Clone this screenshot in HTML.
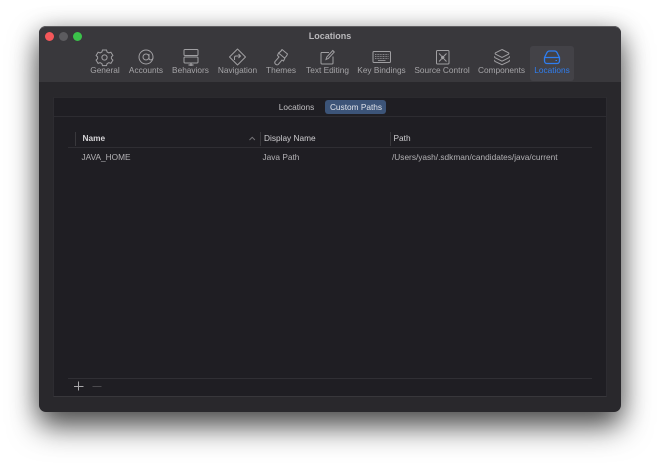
<!DOCTYPE html>
<html><head><meta charset="utf-8"><style>
html,body{margin:0;padding:0;width:660px;height:464px;background:#fff;overflow:hidden;font-family:"Liberation Sans",sans-serif}
.win{position:absolute;left:39px;top:26px;width:582px;height:386px;border-radius:7px;background:#29282c;box-shadow:0 15px 30px rgba(0,0,0,.62),0 4px 24px rgba(0,0,0,.28);overflow:hidden}
.abs{position:absolute}
.t{position:absolute;white-space:nowrap;transform:translateX(-50%);font-size:8.3px;line-height:10px;color:#a5a4a7;filter:blur(.35px)}
.l{position:absolute;white-space:nowrap;font-size:8.3px;line-height:10px;filter:blur(.3px)}
.dot{position:absolute;width:9px;height:9px;border-radius:50%;top:32px;filter:blur(.3px)}
svg.ic{position:absolute;left:0;top:0;filter:blur(.35px)}
</style></head><body>
<div class="win"></div>
<div class="abs" style="left:39px;top:26px;width:582px;height:56px;background:#39383c;border-radius:7px 7px 0 0;border-top:1px solid #5f5e61;box-sizing:border-box"></div>
<div class="abs" style="left:530px;top:46px;width:44px;height:35px;background:#434247;border-radius:3px"></div>
<div class="dot" style="left:45px;background:#f4575a"></div>
<div class="dot" style="left:59px;background:#5c5b5f"></div>
<div class="dot" style="left:73px;background:#3bc24a"></div>
<div class="t" style="left:330px;top:31px;font-size:9px;font-weight:bold;color:#b9b8bb">Locations</div>

<svg class="ic" width="660" height="464" viewBox="0 0 660 464" fill="none" stroke="#a09fa2" stroke-width="1">
<path d="M102.500 50h4l.6 2 1.800.9 2-.7 2 3.300-1.500 1.400v1.800l1.500 1.400-2 3.300-2-.7-1.800.9-.6 2h-4l-.6-2-1.800-.9-2 .7-2-3.300 1.500-1.400v-1.800l-1.500-1.400 2-3.300 2 .7 1.800-.9z"/>
<circle cx="104.500" cy="57.500" r="2.600"/>
<circle cx="146" cy="57" r="7"/><circle cx="146" cy="57" r="3"/><path d="M149 54v4.500c0 2 3.800 2 4-1"/>
<rect x="184" y="49.500" width="14" height="6" rx="1"/><rect x="184" y="57" width="14" height="6" rx="1"/>
<path d="M191 63v3M188.500 65h5" stroke-width="1.300"/>
<path d="M237.500 49l8 8-8 8-8-8z" stroke-linejoin="round"/><path d="M234.500 60v-2.500a1.500 1.500 0 0 1 1.500-1.500h4M238.500 54l2 2-2 2"/>
<path d="M282 49.500l5.500 4.500c-.5 1.500-1.500 3-3 4l-6-5c1.500-.8 2.800-2 3.500-3.500z" stroke-linejoin="round"/>
<path d="M278.500 53l-1 2.500 1.500 1.500-4 4.500a2.300 2.300 0 0 0 3.200 3l3.800-4.500 1.500 1 1.500-3"/>
<path d="M321 52.500h8M333 56.500v6.500a1 1 0 0 1-1 1h-10a1 1 0 0 1-1-1v-10a1 1 0 0 1 1-.5"/><path d="M326 59.500l.8-2.500 6-6.500 1.500 1.500-6 6.500z"/>
<rect x="373" y="51.500" width="17.500" height="11" rx="1"/><path d="M375 54.500h13.500M375 56.500h13.500M375 58.500h13.500" stroke-dasharray="1 .6" stroke-width=".8"/><path d="M378 60.500h7.500" stroke-width=".8"/>
<rect x="436.500" y="50.500" width="12.500" height="13.500" rx="1"/><path d="M439 53.500l2.500 2.500M446.500 53.500l-2.500 2.500M439 61.500l2.500-2.500M446.500 61.500l-2.500-2.500"/><circle cx="442.700" cy="57.500" r="1.200" fill="#a09fa2"/>
<path d="M502 49.500l6.500 3.300c.5.3.5 1 0 1.400l-6.500 3.300-6.500-3.300c-.5-.4-.5-1.100 0-1.400z"/><path d="M495 56.300c-.5.400-.5 1 0 1.400l7 3.500 7-3.500c.5-.4.5-1 0-1.400M495 60c-.5.400-.5 1 0 1.400l7 3.300 7-3.300c.5-.4.5-1 0-1.400"/>
<path d="M544.500 57.500l2.500-5c.6-1 1.300-1.500 2.500-1.500h5c1.200 0 1.900.5 2.500 1.500l2.500 5M544.500 57.500v3.500a2.500 2.500 0 0 0 2.500 2.500h10a2.500 2.500 0 0 0 2.500-2.500v-3.500z" stroke="#2f7ef0" stroke-width="1.300" stroke-linejoin="round"/><path d="M555.500 60.500h1.500" stroke="#2f7ef0"/>
</svg>

<div class="t" style="left:105px;top:65px">General</div>
<div class="t" style="left:146px;top:65px">Accounts</div>
<div class="t" style="left:190.500px;top:65px">Behaviors</div>
<div class="t" style="left:237.500px;top:65px">Navigation</div>
<div class="t" style="left:281px;top:65px">Themes</div>
<div class="t" style="left:327.500px;top:65px">Text Editing</div>
<div class="t" style="left:381.500px;top:65px">Key Bindings</div>
<div class="t" style="left:442px;top:65px">Source Control</div>
<div class="t" style="left:501.500px;top:65px">Components</div>
<div class="t" style="left:552px;top:65px;color:#2f7ef0">Locations</div>

<div class="abs" style="left:53px;top:97px;width:554px;height:300px;background:#1f1e23;border-top:1px solid #2b2a2e;border-left:1px solid #2d2c31;border-right:1px solid #2d2c31;border-bottom:1px solid #38373b;box-sizing:border-box"></div>
<div class="abs" style="left:54px;top:116px;width:552px;height:1px;background:#2d2c31"></div>

<div class="t" style="left:296.500px;top:102px;color:#c0bfc2">Locations</div>
<div class="abs" style="left:325px;top:100px;width:61px;height:14px;background:#3c5478;border-radius:3px"></div>
<div class="t" style="left:356px;top:102px;color:#dfe3ea">Custom Paths</div>

<div class="abs" style="left:75px;top:132px;width:1px;height:14px;background:#39383c"></div>
<div class="abs" style="left:260px;top:132px;width:1px;height:14px;background:#39383c"></div>
<div class="abs" style="left:390px;top:132px;width:1px;height:14px;background:#39383c"></div>
<div class="abs" style="left:68px;top:147px;width:524px;height:1px;background:#2f2e33"></div>

<div class="l" style="left:82.500px;top:133px;color:#d6d5d8;font-weight:bold">Name</div>
<svg class="ic" width="660" height="464" fill="none" stroke="#77767a" stroke-width=".9"><path d="M249.500 140l2.700-2.700 2.700 2.700"/></svg>
<div class="l" style="left:264px;top:133px;color:#cfced1">Display Name</div>
<div class="l" style="left:393.500px;top:133px;color:#cfced1">Path</div>

<div class="l" style="left:81.500px;top:152px;color:#b3b2b5">JAVA_HOME</div>
<div class="l" style="left:262.500px;top:152px;color:#b3b2b5">Java Path</div>
<div class="l" style="left:392px;top:152px;color:#b3b2b5">/Users/yash/.sdkman/candidates/java/current</div>

<div class="abs" style="left:68px;top:378px;width:524px;height:1px;background:#302f34"></div>
<svg class="ic" width="660" height="464" fill="none"><path d="M78.500 381.500v9M74 386.500h9.500" stroke="#a8a7aa"/><path d="M92.500 386.500h9" stroke="#4b4a4e"/></svg>
</body></html>
